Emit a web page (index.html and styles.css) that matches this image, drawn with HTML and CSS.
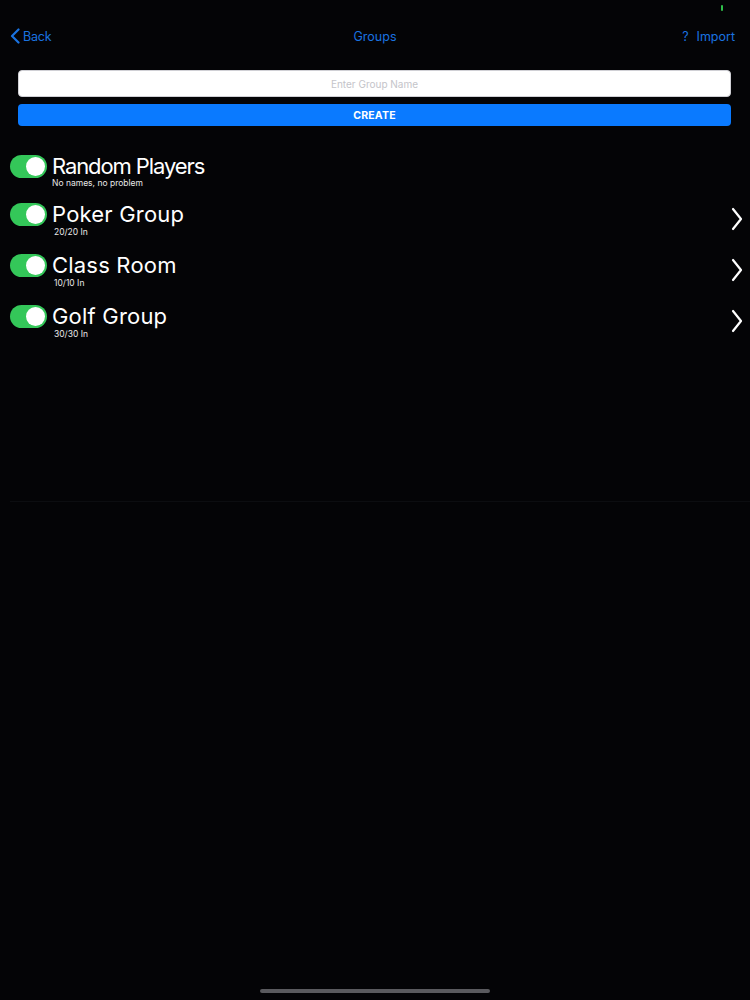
FILE: index.html
```html
<!DOCTYPE html>
<html lang="en">
<head>
    <meta charset="UTF-8">
    <meta name="viewport" content="width=device-width, initial-scale=1.0">
    <title>Groups</title>
    <link rel="stylesheet" href="styles.css">
</head>
<body>
    <div class="screen">
        <div class="status"><span class="dot"></span></div>
        <div class="navbar">
            <a class="nav-back" href="#">
                <svg class="back-icon" viewBox="0 0 10 16" width="10" height="16">
                    <path d="M8.5 1.5 L2 8 L8.5 14.5" fill="none" stroke="#1a73e0" stroke-width="2.2" stroke-linecap="round" stroke-linejoin="round"/>
                </svg>
                <span>Back</span>
            </a>
            <div class="nav-title">Groups</div>
            <div class="nav-right">
                <span class="help">?</span>
                <span>Import</span>
            </div>
        </div>

        <div class="create-form">
            <input class="group-input" type="text" placeholder="Enter Group Name">
            <button class="create-btn">CREATE</button>
        </div>

        <ul class="group-list">
            <li class="group-row">
                <span class="toggle"><span class="knob"></span></span>
                <div class="group-text">
                    <div class="group-name name-tight">Random Players</div>
                    <div class="group-sub sub-tight">No names, no problem</div>
                </div>
            </li>
            <li class="group-row">
                <span class="toggle"><span class="knob"></span></span>
                <div class="group-text">
                    <div class="group-name">Poker Group</div>
                    <div class="group-sub">20/20 In</div>
                </div>
                <svg class="chevron" viewBox="0 0 12 24" width="12" height="24">
                    <path d="M2 2 L10 12 L2 22" fill="none" stroke="#fff" stroke-width="2.2" stroke-linecap="round" stroke-linejoin="round"/>
                </svg>
            </li>
            <li class="group-row">
                <span class="toggle"><span class="knob"></span></span>
                <div class="group-text">
                    <div class="group-name">Class Room</div>
                    <div class="group-sub">10/10 In</div>
                </div>
                <svg class="chevron" viewBox="0 0 12 24" width="12" height="24">
                    <path d="M2 2 L10 12 L2 22" fill="none" stroke="#fff" stroke-width="2.2" stroke-linecap="round" stroke-linejoin="round"/>
                </svg>
            </li>
            <li class="group-row">
                <span class="toggle"><span class="knob"></span></span>
                <div class="group-text">
                    <div class="group-name">Golf Group</div>
                    <div class="group-sub">30/30 In</div>
                </div>
                <svg class="chevron" viewBox="0 0 12 24" width="12" height="24">
                    <path d="M2 2 L10 12 L2 22" fill="none" stroke="#fff" stroke-width="2.2" stroke-linecap="round" stroke-linejoin="round"/>
                </svg>
            </li>
        </ul>

        <div class="divider"></div>

        <div class="home-bar"></div>
    </div>
</body>
</html>
```

FILE: styles.css
```css
body {
    margin: 0;
    background: #040406;
    font-family: Inter, "Liberation Sans", Arial, sans-serif;
    color: #fff;
}
.screen {
    width: 750px;
    height: 1000px;
    display: flex;
    flex-direction: column;
}
.status {
    height: 12px;
    display: flex;
    justify-content: flex-end;
    padding: 5px 27px 0 0;
    box-sizing: border-box;
}
.status .dot {
    width: 2px;
    height: 6px;
    border-radius: 1px;
    background: #2fbf4a;
}
.navbar {
    height: 48px;
    display: flex;
    align-items: center;
    justify-content: space-between;
    padding: 0 15px 0 10px;
    font-size: 12.5px;
    color: #1a73e0;
}
.nav-back {
    display: flex;
    align-items: center;
    gap: 3px;
    color: #1a73e0;
    text-decoration: none;
    width: 120px;
    letter-spacing: -0.2px;
}
.nav-title {
    flex: 1;
    text-align: center;
    padding-left: 5px;
}
.nav-right {
    width: 120px;
    display: flex;
    justify-content: flex-end;
    gap: 8px;
}
.create-form {
    display: flex;
    flex-direction: column;
    gap: 7px;
    padding: 10px 19px 0 18px;
}
.group-input {
    height: 27px;
    box-sizing: border-box;
    border: 1px solid #d0d0d5;
    border-radius: 4px;
    background: #fff;
    text-align: center;
    font-family: inherit;
    font-size: 10px;
    outline: none;
}
.group-input::placeholder {
    color: #c4c4c9;
}
.create-btn {
    height: 22px;
    border: none;
    border-radius: 4px;
    background: #0a7aff;
    color: #fff;
    font-family: inherit;
    font-size: 10.5px;
    font-weight: 700;
    letter-spacing: 0.2px;
}
.group-list {
    list-style: none;
    margin: 0;
    padding: 28px 7px 0 10px;
}
.group-row {
    height: 51px;
    display: flex;
    align-items: flex-start;
}
.group-row:first-child {
    height: 48px;
}
.toggle {
    width: 37px;
    height: 23px;
    border-radius: 12px;
    background: #34c759;
    display: flex;
    justify-content: flex-end;
    align-items: center;
    padding: 2px;
    box-sizing: border-box;
    margin-top: 1px;
}
.knob {
    width: 19px;
    height: 19px;
    border-radius: 50%;
    background: #fff;
}
.group-text {
    flex: 1;
    margin-left: 5px;
}
.group-name {
    font-size: 22px;
    line-height: 22px;
    margin-top: 1px;
    letter-spacing: 0.2px;
}
.name-tight {
    letter-spacing: -1.1px;
}
.group-sub {
    font-size: 8.5px;
    line-height: 10px;
    margin: 2px 0 0 2px;
    color: #e8e8e8;
}
.sub-tight {
    margin: 1px 0 0;
}
.chevron {
    margin-top: 5px;
}
.divider {
    margin: 146px 0 0 10px;
    height: 1px;
    background: #0c0d10;
}
.home-bar {
    margin: auto auto 7px;
    width: 230px;
    height: 4px;
    border-radius: 2px;
    background: #5a5a5e;
}
```
